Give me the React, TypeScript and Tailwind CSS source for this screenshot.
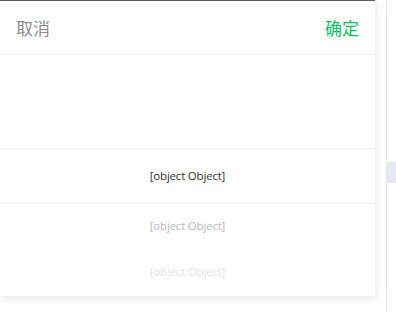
import React from 'react';

const cjk = { fontFamily: '"Noto Sans CJK SC", "Noto Sans", sans-serif' };
const latin = { fontFamily: '"Open Sans", "Noto Sans", sans-serif' };

export default function App() {
  return (
    <div className="relative flex h-[312px] w-[396px] overflow-hidden bg-white">
      {/* picker panel */}
      <div className="flex h-[296px] w-[375px] shrink-0 flex-col bg-white shadow-[0_2px_10px_rgba(0,0,0,0.12)]">
        <div className="h-px w-full bg-[#5e5e5e]" />
        <div className="flex h-[53px] items-center justify-between px-4 text-[17px]" style={cjk}>
          <span className="text-[#8a8b8d]">取消</span>
          <span className="text-[#07c160]">确定</span>
        </div>
        <div className="h-px bg-[#eeeeee]" />
        <div className="h-[93px]" />
        <div className="h-px bg-[#eeeeee]" />
        <div className="flex h-[54px] items-center justify-center text-[11.5px] tracking-[-0.2px] text-[#323233]" style={latin}>
          [object Object]
        </div>
        <div className="h-px bg-[#eeeeee]" />
        <div className="flex h-[44px] items-center justify-center text-[11.5px] tracking-[-0.2px] text-[#b9b9bb]" style={latin}>
          [object Object]
        </div>
        <div className="flex h-[48px] items-center justify-center text-[11.5px] tracking-[-0.2px] text-[#e2e2e4]" style={latin}>
          [object Object]
        </div>
      </div>

      {/* page behind */}
      <div className="ml-[11px] flex flex-1 border-l border-[#e4e4e6] pt-[162px]">
        <div className="h-[21px] w-full bg-[#e6e8f4]" />
      </div>
    </div>
  );
}
